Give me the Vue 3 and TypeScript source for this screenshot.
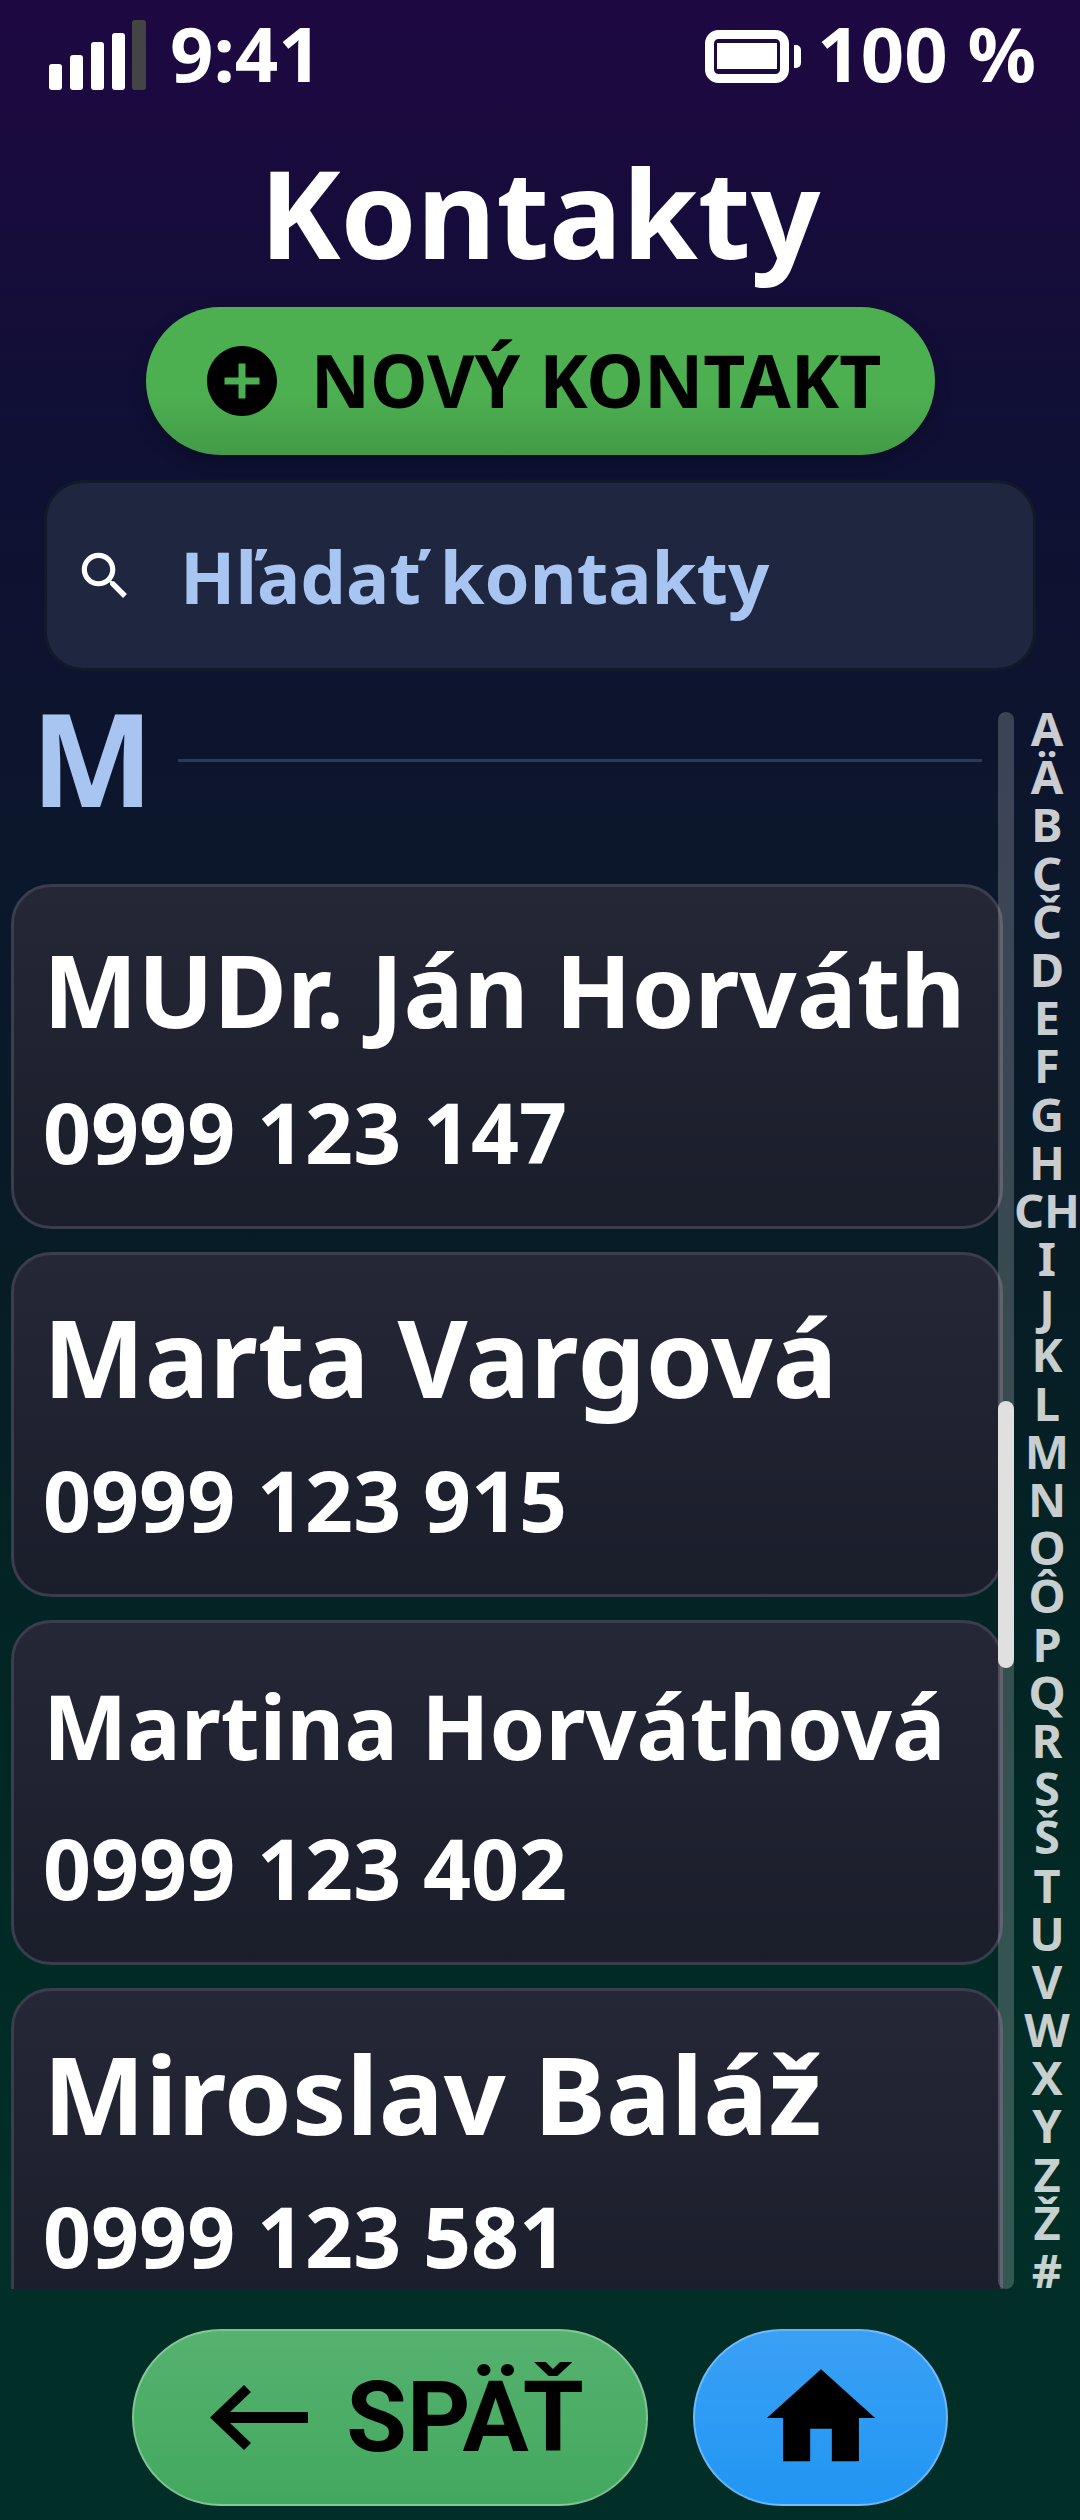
<script setup lang="ts">
interface Contact { name: string; phone: string; size: number }
const letters: string[] = ['A','Ä','B','C','Č','D','E','F','G','H','CH','I','J','K','L','M','N','O','Ô','P','Q','R','S','Š','T','U','V','W','X','Y','Z','Ž','#']
const contacts: Contact[] = [
  { name: 'MUDr. Ján Horváth', phone: '0999 123 147', size: 100.4 },
  { name: 'Marta Vargová', phone: '0999 123 915', size: 108 },
  { name: 'Martina Horváthová', phone: '0999 123 402', size: 89.4 },
  { name: 'Miroslav Baláž', phone: '0999 123 581', size: 108.5 },
]
</script>

<template>
  <div class="screen">
    <header class="status">
      <div class="status-left">
        <svg class="signal" width="97" height="72" viewBox="0 0 97 72">
          <rect x="0" y="44" width="13" height="26" rx="3" fill="#fff" />
          <rect x="21" y="35" width="13" height="35" rx="3" fill="#fff" />
          <rect x="42" y="22" width="13" height="48" rx="3" fill="#fff" />
          <rect x="63" y="13" width="13" height="57" rx="3" fill="#fff" />
          <rect x="83" y="0" width="14" height="70" rx="3" fill="#444" />
        </svg>
        <span class="status-text">9:41</span>
      </div>
      <div class="status-right">
        <svg class="battery" width="96" height="53" viewBox="0 0 96 53">
          <rect x="4.5" y="4.5" width="75" height="44" rx="9" fill="none" stroke="#fff" stroke-width="9" />
          <rect x="12" y="13" width="60" height="26" fill="#fff" />
          <path d="M89 15h2a5 5 0 0 1 5 5v13a5 5 0 0 1-5 5h-2z" fill="#fff" />
        </svg>
        <span class="status-text">100 %</span>
      </div>
    </header>

    <h1 class="title">Kontakty</h1>

    <div class="new-wrap">
      <button class="new-btn">
        <svg width="84" height="84" viewBox="0 0 24 24"><path d="M12 2C6.48 2 2 6.48 2 12s4.48 10 10 10 10-4.48 10-10S17.52 2 12 2zm5 11h-4v4h-2v-4H7v-2h4V7h2v4h4v2z" fill="#000" /></svg>
        <span class="new-label">NOVÝ KONTAKT</span>
      </button>
    </div>

    <div class="search">
      <svg width="62" height="62" viewBox="0 0 24 24"><path d="M15.5 14h-.79l-.28-.27C15.41 12.59 16 11.11 16 9.5 16 5.91 13.09 3 9.5 3S3 5.91 3 9.5 5.91 16 9.5 16c1.61 0 3.09-.59 4.23-1.57l.27.28v.79l5 4.99L20.49 19l-4.99-5zm-6 0C7.01 14 5 11.99 5 9.5S7.01 5 9.5 5 14 7.01 14 9.5 11.99 14 9.5 14z" fill="#fff" /></svg>
      <span>Hľadať kontakty</span>
    </div>

    <main class="body">
      <section class="list">
        <div class="section-head">
          <span class="section-letter">M</span>
          <span class="section-line"></span>
        </div>
        <article v-for="c in contacts" :key="c.phone" class="card">
          <div class="name" :style="{ fontSize: c.size + 'px' }">{{ c.name }}</div>
          <div class="phone">{{ c.phone }}</div>
        </article>
      </section>
      <div class="track"><div class="thumb"></div></div>
      <nav class="alpha">
        <span v-for="l in letters" :key="l">{{ l }}</span>
      </nav>
    </main>

    <footer class="nav">
      <button class="back">
        <svg width="98" height="65" viewBox="0 0 98 65"><path d="M0 32.5 34 0l7 7-21 20h78v11H20l21 20-7 7z" fill="#000" /></svg>
        <span>SPÄŤ</span>
      </button>
      <button class="home">
        <svg width="130" height="130" viewBox="0 0 24 24"><path d="M10 20v-6h4v6h5v-8h3L12 3 2 12h3v8z" fill="#000" /></svg>
      </button>
    </footer>
  </div>
</template>

<style>
html, body { margin: 0; background: #012f27; }
</style>

<style scoped>
.screen {
  width: 1080px;
  height: 2520px;
  display: flex;
  flex-direction: column;
  overflow: hidden;
  color: #fff;
  font-family: "Noto Sans", sans-serif;
  background: linear-gradient(180deg, #1e0842 0%, #0f1034 18%, #0c162c 32%, #081b26 48%, #022624 68%, #012f27 90%);
}
.status {
  height: 110px;
  flex: none;
  box-sizing: border-box;
  padding: 20px 44px 0 49px;
  display: flex;
  justify-content: space-between;
  font-size: 76px;
  font-weight: 700;
  line-height: 72px;
}
.status-left, .status-right { display: flex; align-items: center; height: 72px; }
.status-text { margin-bottom: 6px; }
.signal { margin-right: 24px; }
.battery { margin-right: 16px; }
.title {
  margin: 0;
  height: 197px;
  flex: none;
  text-align: center;
  font-size: 122px;
  font-weight: 700;
  line-height: 205px;
}
.new-wrap { display: flex; justify-content: center; flex: none; }
.new-btn {
  width: 789px;
  height: 148px;
  border: 0;
  border-radius: 74px;
  background: linear-gradient(180deg, #4caf50 0%, #4caf50 60%, #439b47 100%);
  box-shadow: 0 6px 16px rgba(0,0,0,.25);
  display: flex;
  align-items: center;
  justify-content: center;
  gap: 27px;
  font-family: "Noto Sans", sans-serif;
  font-size: 73px;
  font-weight: 700;
  color: #000;
  padding: 0 0 0 1px;
}
.new-label { margin-bottom: 4px; }
.search {
  margin: 28px 47px 0;
  height: 185px;
  flex: none;
  box-sizing: border-box;
  border-radius: 36px;
  background: #1e2640;
  box-shadow: 0 0 0 3px #12192b;
  display: flex;
  align-items: center;
  padding-left: 27px;
  gap: 44px;
  font-size: 72.4px;
  font-weight: 700;
  color: #a8c4f0;
}
.body {
  flex: none;
  height: 1577px;
  margin-top: 44px;
  display: flex;
  position: relative;
}
.list {
  width: 1003px;
  height: 1577px;
  box-sizing: border-box;
  padding-left: 11px;
  overflow: hidden;
  flex: none;
}
.section-head {
  height: 172px;
  display: flex;
  align-items: flex-start;
  padding-left: 20px;
}
.section-letter {
  flex: none;
  width: 136px;
  margin-right: 11px;
  color: #a8c4f0;
  font-size: 130px;
  font-weight: 700;
  line-height: 90px;
  height: 94px;
}
.section-line {
  flex: none;
  width: 804px;
  height: 3px;
  margin-top: 47px;
  background: #2b3a5a;
}
.card {
  box-sizing: border-box;
  height: 345px;
  margin-bottom: 23px;
  border: 3px solid #3a3d4d;
  border-radius: 40px;
  background: linear-gradient(180deg, #252736 0%, #1a1d2a 100%);
  padding: 0 0 0 29px;
  display: flex;
  flex-direction: column;
}
.name {
  height: 195px;
  line-height: 204px;
  font-weight: 700;
  white-space: nowrap;
}
.phone {
  font-size: 84px;
  font-weight: 700;
  line-height: 100px;
}
.track {
  position: absolute;
  left: 998px;
  top: 0;
  width: 16px;
  height: 1577px;
  border-radius: 8px;
  background: rgba(255,255,255,.2);
}
.thumb {
  position: absolute;
  left: 0;
  top: 689px;
  width: 16px;
  height: 267px;
  border-radius: 8px;
  background: #e0e0e0;
}
.alpha {
  position: absolute;
  left: 1014px;
  top: -8px;
  width: 66px;
  display: flex;
  flex-direction: column;
  align-items: center;
  font-size: 47px;
  font-weight: 700;
  line-height: 48.2px;
  color: rgba(255,255,255,.78);
}
.alpha span { height: 48.2px; white-space: nowrap; }
.nav {
  flex: none;
  display: flex;
  padding: 40px 0 0 132px;
  gap: 45px;
}
.back, .home {
  height: 177px;
  box-sizing: border-box;
  border: 2px solid rgba(255,255,255,.3);
  border-radius: 88.5px;
  display: flex;
  align-items: center;
  justify-content: center;
  color: #000;
  padding: 0;
}
.back {
  width: 516px;
  gap: 38px;
  padding-left: 14px;
  background: linear-gradient(180deg, #55b26f 0%, #43a85f 100%);
  font-family: Roboto, sans-serif;
  font-size: 98.5px;
  font-weight: 700;
}
.home {
  width: 255px;
  background: linear-gradient(180deg, #3aa0f5 0%, #2196f3 100%);
}
</style>
